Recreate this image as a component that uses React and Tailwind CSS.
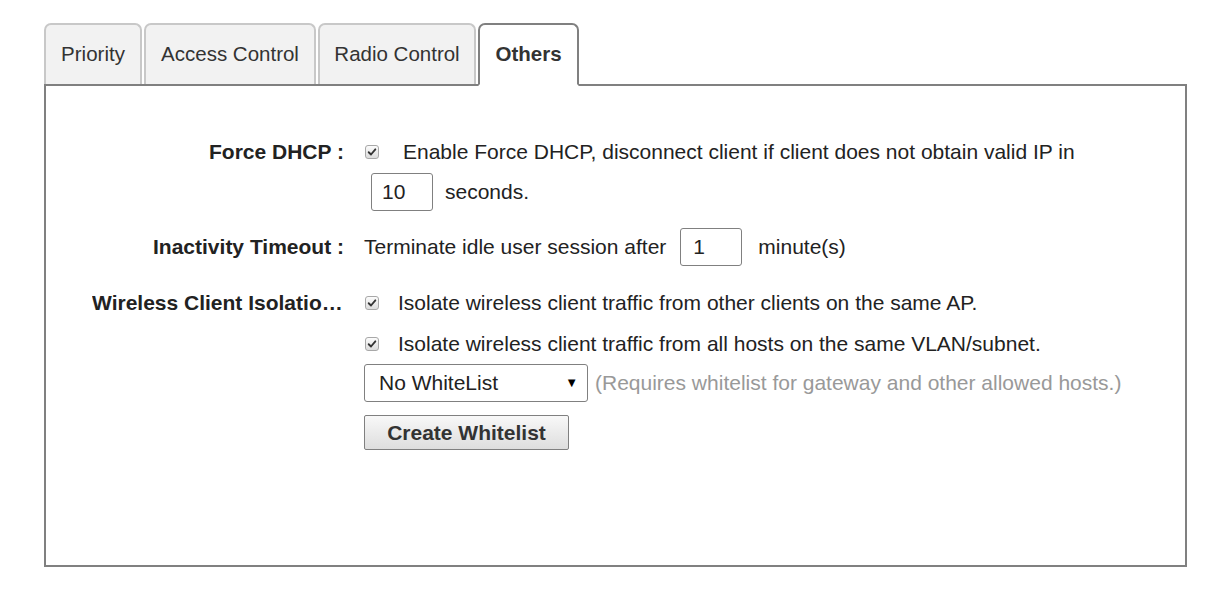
import React from "react";

// Casilla marcada (estilo del navegador antiguo)
const Check = ({ className = "" }) => (
  <span className={`inline-flex h-[14px] w-[14px] shrink-0 items-center justify-center rounded-[3px] border border-[#a8a8a8] bg-gradient-to-b from-[#fcfcfc] to-[#dcdcdc] ${className}`}>
    <svg viewBox="0 0 12 12" className="h-[10px] w-[10px]">
      <path d="M2 6.3 L4.8 9 L10 2.8" fill="none" stroke="#333" strokeWidth="2.2" strokeLinecap="round" strokeLinejoin="round" />
    </svg>
  </span>
);

const Tab = ({ label, active, w }) => (
  <div
    className={`flex h-[61px] items-center justify-center rounded-t-[7px] border-2 ${w} ${
      active
        ? "relative z-10 -mb-[2px] h-[63px] border-[#808080] border-b-white bg-white font-bold text-[#333]"
        : "border-[#c8c8c8] border-b-0 bg-[#f2f2f2] text-[#333]"
    }`}
  >
    {label}
  </div>
);

export default function App() {
  return (
    <div className="min-h-[594px] w-[1227px] bg-white pl-[44px] pt-[23px] text-[21px] text-[#222]" style={{ fontFamily: '"Liberation Sans", Arial, sans-serif' }}>
      {/* Pestañas */}
      <div className="flex items-end gap-[2px] text-[20.5px]">
        <Tab label="Priority" w="w-[98px]" />
        <Tab label="Access Control" w="w-[172px]" />
        <Tab label="Radio Control" w="w-[158px]" />
        <Tab label="Others" w="w-[101px]" active />
      </div>

      {/* Panel */}
      <div className="h-[483px] w-[1143px] border-2 border-[#808080] bg-white pl-[46px] pt-[51px]">
        {/* Force DHCP */}
        <div className="flex">
          <div className="h-[30px] w-[252px] text-right font-bold leading-[30px]">Force DHCP :</div>
          <div className="ml-[20px] flex flex-col">
            <div className="flex h-[30px] items-center">
              <Check className="ml-[1px]" />
              <span className="ml-[24px]">Enable Force DHCP, disconnect client if client does not obtain valid IP in</span>
            </div>
            <div className="mt-[6px] flex items-center">
              <div className="ml-[7px] flex h-[38px] w-[62px] items-center rounded-[3px] border border-[#808080] pl-[10px]">10</div>
              <span className="ml-[12px]">seconds.</span>
            </div>
          </div>
        </div>

        {/* Inactivity Timeout */}
        <div className="mt-[17px] flex h-[38px] items-center">
          <div className="w-[252px] text-right font-bold">Inactivity Timeout :</div>
          <span className="ml-[20px]">Terminate idle user session after</span>
          <div className="ml-[14px] flex h-[38px] w-[62px] items-center rounded-[3px] border border-[#808080] pl-[12px]">1</div>
          <span className="ml-[16px]">minute(s)</span>
        </div>

        {/* Wireless Client Isolation */}
        <div className="mt-[22px] flex">
          <div className="h-[30px] w-[252px] truncate text-right font-bold leading-[30px]">Wireless Client Isolation :</div>
          <div className="ml-[20px] flex flex-col">
            <div className="flex h-[30px] items-center">
              <Check className="ml-[1px]" />
              <span className="ml-[19px]">Isolate wireless client traffic from other clients on the same AP.</span>
            </div>
            <div className="mt-[11px] flex h-[30px] items-center">
              <Check className="ml-[1px]" />
              <span className="ml-[19px]">Isolate wireless client traffic from all hosts on the same VLAN/subnet.</span>
            </div>
            <div className="mt-[5px] flex items-center">
              <div className="flex h-[38px] w-[224px] items-center justify-between rounded-[3px] border border-[#808080] bg-white pl-[14px] pr-[9px]">
                <span>No WhiteList</span>
                <span className="text-[13px] text-black">▼</span>
              </div>
              <span className="ml-[7px] text-[#999]">(Requires whitelist for gateway and other allowed hosts.)</span>
            </div>
            <div className="mt-[13px] flex h-[35px] w-[205px] items-center justify-center rounded-[2px] border border-[#808080] bg-gradient-to-b from-[#f8f8f8] to-[#dedede] font-bold text-[#333]">
              Create Whitelist
            </div>
          </div>
        </div>
      </div>
    </div>
  );
}
